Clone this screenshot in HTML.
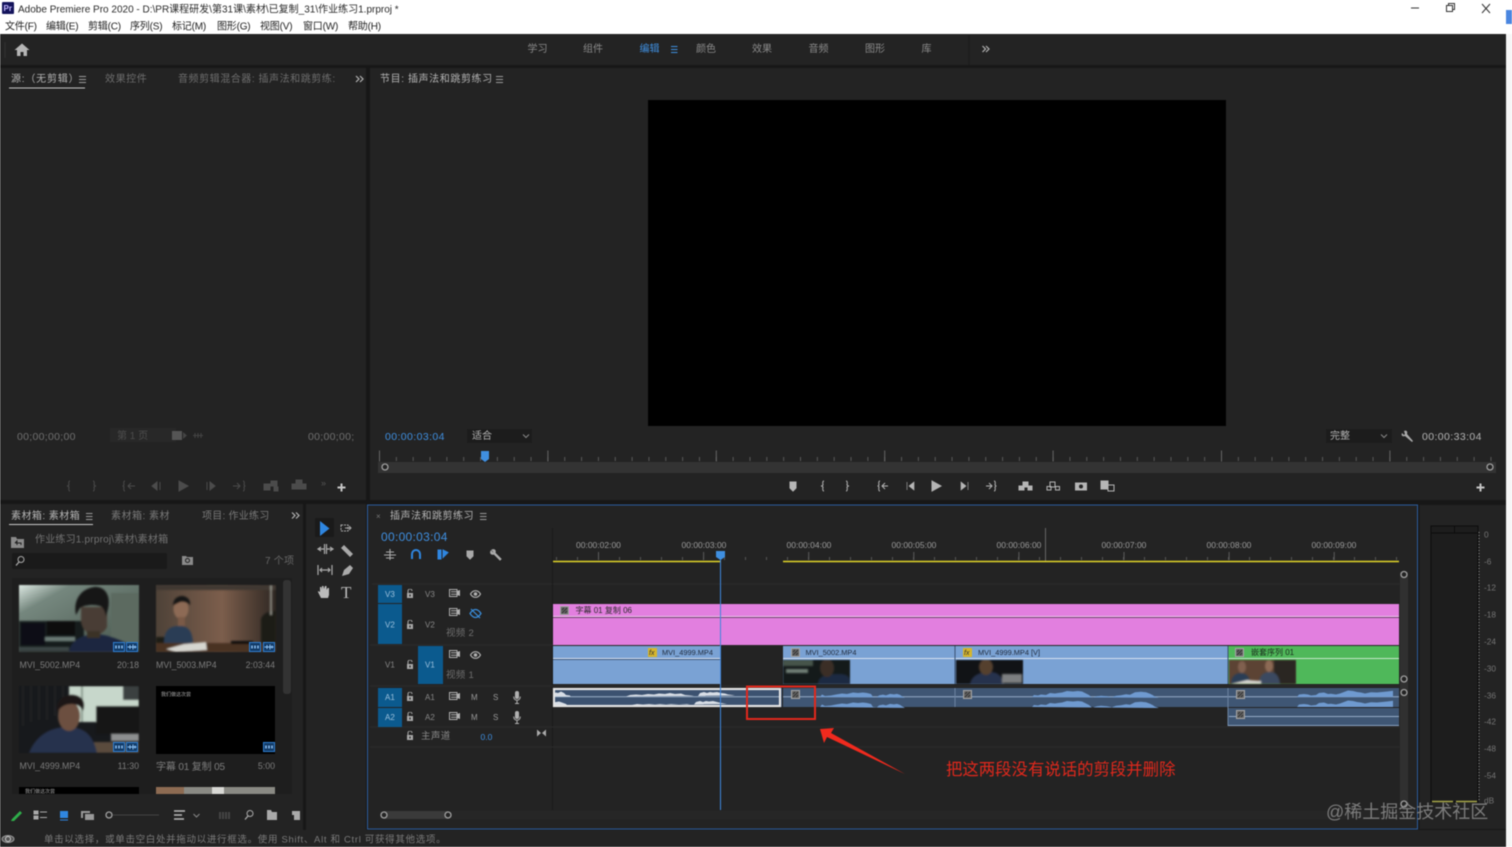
<!DOCTYPE html>
<html lang="zh"><head><meta charset="utf-8"><title>Adobe Premiere Pro 2020</title>
<style>
html,body{margin:0;padding:0;width:1512px;height:847px;overflow:hidden;background:#fff}
svg{display:block;filter:blur(.4px)}
text{font-family:"Liberation Sans","Noto Sans CJK SC",sans-serif;font-size:10px;fill:#8f8f8f;white-space:pre}
.w{fill:#1f1f1f;font-size:10px;letter-spacing:-.2px}
.g{fill:#8a8a8a}.l{fill:#b4b4b4}.d{fill:#4f4f4f}.b{fill:#3f8fe0}
.tab{letter-spacing:.8px;font-size:10px}
.i{fill:#a8a8a8}.s{stroke:#a8a8a8;fill:none;stroke-width:1.2}
.dim{fill:#4d4d4d}
.n{font-size:8.8px;fill:#7c7c7c}
.r{font-size:8.500px;fill:#9a9a9a}
.c{font-size:7.400px;fill:#1f2a3c}
.m{font-size:8.300px;fill:#757575}
</style></head><body>
<svg width="1512" height="847" viewBox="0 0 1512 847" xmlns="http://www.w3.org/2000/svg">
<defs>
<linearGradient id="wall1" x1="0" y1="0" x2="1" y2="1"><stop offset="0" stop-color="#dce8e2"/><stop offset=".22" stop-color="#75877e"/><stop offset="1" stop-color="#46544b"/></linearGradient>
<linearGradient id="brick" x1="0" y1="0" x2="1" y2="0"><stop offset="0" stop-color="#4e4238"/><stop offset=".55" stop-color="#7c5e4c"/><stop offset="1" stop-color="#2e2722"/></linearGradient>
<filter id="bl"><feGaussianBlur stdDeviation=".8"/></filter>
<symbol id="lock" viewBox="0 0 8 9"><path d="M1 4h6v5H1z" fill="#a8a8a8"/><path d="M2 4V2a2 2 0 0 1 4 0" fill="none" stroke="#a8a8a8" stroke-width="1"/><rect x="3.400" y="5.500" width="1.200" height="2" fill="#222"/></symbol>
<symbol id="film" viewBox="0 0 11 8"><path d="M.5.5h7.500v7H.5z" fill="none" stroke="#b0b0b0"/><path d="M2 2.800h6M2 5.200h6" stroke="#b0b0b0"/><path d="M8 2l3-1v6L8 6z" fill="#b0b0b0"/></symbol>
<symbol id="eye" viewBox="0 0 11 8"><path d="M.5 4C2 1.500 3.700.7 5.500.7S9 1.500 10.500 4C9 6.500 7.300 7.300 5.500 7.300S2 6.500.5 4z" fill="none" stroke="#b0b0b0" stroke-width="1.200"/><circle cx="5.500" cy="4" r="1.800" fill="#b0b0b0"/></symbol>
<symbol id="mic" viewBox="0 0 8 13"><rect x="2" y="0" width="4" height="8" rx="2" fill="#b0b0b0"/><path d="M.7 5.500c0 5 6.600 5 6.600 0M4 9.500V12M2 12.500h4" fill="none" stroke="#b0b0b0"/></symbol>
<symbol id="mk" viewBox="0 0 9 9"><rect x=".5" y=".5" width="8" height="8" fill="#676767" stroke="#a5a5a5"/><path d="M2 7l5-5M2 4l2-2M5 7l2-2" stroke="#333"/></symbol>
<symbol id="fx" viewBox="0 0 9 9"><rect width="9" height="9" fill="#d6b62c"/><text x="1" y="7" style="font-size:7px;font-style:italic;fill:#333">fx</text></symbol>
<symbol id="ball" viewBox="0 0 8 8"><circle cx="4" cy="4" r="3" fill="#232323" stroke="#a0a0a0" stroke-width="1.300"/></symbol>
<symbol id="badge" viewBox="0 0 12 10"><rect x=".5" y=".5" width="11" height="9" fill="#123a66" stroke="#2f7ed0"/><path d="M3 3.500v3M6 3.500v3M9 3.500v3" stroke="#8fc3f5" stroke-width="1.500"/></symbol>
<symbol id="badge2" viewBox="0 0 12 10"><rect x=".5" y=".5" width="11" height="9" fill="#123a66" stroke="#2f7ed0"/><path d="M1.500 5h9M4 3v4M7 2.500v5M9 3.500v3" stroke="#8fc3f5"/></symbol>
</defs>

<!-- window chrome -->
<rect width="1512" height="847" fill="#ffffff"/>
<rect x="2" y="2" width="12" height="12" rx="1" fill="#14145c"/>
<text x="3.500" y="11" style="font-size:8px;fill:#c4b8ff;font-weight:bold">Pr</text>
<text x="18" y="12.500" style="font-size:10px;fill:#2a2a2a">Adobe Premiere Pro 2020 - D:\PR课程研发\第31课\素材\已复制_31\作业练习1.prproj *</text>
<text class="w" x="5" y="29.500">文件(F)</text><text class="w" x="46" y="29.500">编辑(E)</text><text class="w" x="88" y="29.500">剪辑(C)</text><text class="w" x="130" y="29.500">序列(S)</text><text class="w" x="172" y="29.500">标记(M)</text><text class="w" x="217" y="29.500">图形(G)</text><text class="w" x="260" y="29.500">视图(V)</text><text class="w" x="303" y="29.500">窗口(W)</text><text class="w" x="348" y="29.500">帮助(H)</text>
<path d="M1411 8h8" stroke="#333" stroke-width="1"/>
<path d="M1446.500 5.500h6v6h-6zM1448.500 5.500V3.500h6v6h-2" fill="none" stroke="#333"/>
<path d="M1482 4l8 9M1490 4l-8 9" stroke="#333"/>
<rect x="1506" y="10" width="6" height="14" fill="#4a86e0"/>

<!-- app bg -->
<rect x="0" y="34" width="1506" height="813" fill="#171717"/>
<rect x="1506" y="34" width="6" height="813" fill="#f6f6f6"/>
<rect x="0" y="34" width="1506" height="31" fill="#232323"/>
<path d="M5 42v16" stroke="#333"/>
<path d="M22 43.500l-7.500 6.500H17v6h3.500v-4h3v4H27v-6h2.500z" fill="#b5b5b5"/>
<text x="527.500" y="52" class="g">学习</text><text x="583" y="52" class="g">组件</text>
<text x="639.500" y="52" class="b">编辑</text><path d="M671 46.500h6.500M671 49.500h6.500M671 52.500h6.500" stroke="#3f8fe0"/>
<text x="696" y="52" class="g">颜色</text><text x="752" y="52" class="g">效果</text><text x="808.500" y="52" class="g">音频</text><text x="865" y="52" class="g">图形</text><text x="921.500" y="52" class="g">库</text>
<path d="M969 35v30" stroke="#1a1a1a"/>
<path d="M982.500 46l3 3-3 3M986 46l3 3-3 3" fill="none" stroke="#b5b5b5" stroke-width="1.200"/>

<!-- source panel -->
<rect x="0" y="68" width="366" height="432" fill="#232323"/>
<text x="11" y="82" class="tab l">源:（无剪辑）</text>
<path d="M79 76.500h7M79 79.500h7M79 82.500h7" stroke="#9a9a9a"/>
<rect x="9" y="87.500" width="76" height="1" fill="#c8c8c8"/>
<text x="105" y="82" class="tab g" style="fill:#6e6e6e;letter-spacing:.6px">效果控件</text>
<text x="178" y="82" class="tab" style="fill:#6e6e6e;letter-spacing:.55px">音频剪辑混合器: 插声法和跳剪练:</text>
<path d="M356 76l3 3-3 3M360 76l3 3-3 3" fill="none" stroke="#b5b5b5" stroke-width="1.200"/>
<text x="17" y="440" style="font-size:10.500px;fill:#6f6f6f;letter-spacing:.3px">00;00;00;00</text>
<rect x="110" y="428" width="66" height="14" fill="#282828"/>
<text x="117" y="439" class="dim">第 1 页</text>
<rect x="172" y="431" width="10" height="9" fill="#555"/><path d="M183 432l4 3.500-4 3.500z" fill="#444"/>
<path d="M193 435.500h10M195 433v5M198 433v5M201 433v5" stroke="#444"/>
<text x="308" y="440" style="font-size:10.500px;fill:#6f6f6f;letter-spacing:.3px">00;00;00;</text>
<g stroke="#4b4b4b" fill="#4b4b4b">
<path d="M70 481c-2 0-1 4-1 4l-1.500 1 1.500 1s-1 4 1 4M93 481c2 0 1 4 1 4l1.500 1-1.500 1s1 4-1 4" fill="none"/>
<path d="M125 481c-2 0-1 4-1 4l-1 1 1 1s-1 4 1 4M135 486h-7M131 483l-3 3 3 3" fill="none"/><path d="M157 482v8l-5-4zM160 482v8" />
<path d="M179 481l9 5-9 5z"/><path d="M207 482v8M210 482l5 4-5 4z"/>
<path d="M233 486h7M237 483l3 3-3 3M243 481c2 0 1 4 1 4l1 1-1 1s1 4-1 4" fill="none"/>
<path d="M264 484h6v6h-6zM271 481h6v5h-6zM274 487h4v4h-4z"/><path d="M292 484h14v5h-14zM296 480h6v4h-6z"/>
</g>
<text x="321" y="486" style="font-size:9px;fill:#555">»</text>
<path d="M341.500 483.500v8M337.500 487.500h8" stroke="#c4c4c4" stroke-width="2"/>

<!-- program panel -->
<rect x="370" y="68" width="1136" height="432" fill="#232323"/>
<text x="380" y="82" class="tab l" style="letter-spacing:.6px">节目: 插声法和跳剪练习</text>
<path d="M496 76.500h7M496 79.500h7M496 82.500h7" stroke="#9a9a9a"/>
<rect x="648" y="100" width="578" height="326" fill="#000"/>
<text x="385" y="440" class="b" style="font-size:10.500px;letter-spacing:.4px">00:00:03:04</text>
<rect x="467" y="429" width="65" height="14" fill="#1c1c1c"/><text x="472" y="439" class="l">适合</text>
<path d="M523 434.500l3 3 3-3" fill="none" stroke="#888"/>
<rect x="1326" y="429" width="66" height="14" fill="#1c1c1c"/><text x="1330" y="439" class="l">完整</text>
<path d="M1381 434.500l3 3 3-3" fill="none" stroke="#888"/>
<path d="M1404 431c2-1 4 0 3 3l6 7-1 1-7-6c-3 1-4-1-3-3l2 2 1-1z" fill="#aaa"/>
<text x="1422" y="440" class="l" style="font-size:10.500px;letter-spacing:.4px">00:00:33:04</text>
<path d="M379 459H1494" stroke="#5a5a5a" stroke-width="4" stroke-dasharray="1 15.840"/>
<path d="M379 456H1494" stroke="#666" stroke-width="11" stroke-dasharray="1 167.400"/>
<rect x="378" y="462" width="1118" height="11" fill="#333"/>
<use href="#ball" x="381" y="463" width="8" height="8"/><use href="#ball" x="1486" y="463" width="8" height="8"/>
<path d="M481 451h8v8l-4 3-4-3z" fill="#3f8fe0"/>
<g fill="#b5b5b5" stroke="#b5b5b5">
<path d="M790 482h6v6l-3 3-3-3z"/>
<path d="M824 481c-2 0-1 4-1 4l-1.500 1 1.500 1s-1 4 1 4M846 481c2 0 1 4 1 4l1.500 1-1.500 1s1 4-1 4" fill="none"/>
<path d="M880 481c-2 0-1 4-1 4l-1 1 1 1s-1 4 1 4M888 486h-6M885 483l-3 3 3 3" fill="none"/>
<path d="M914 482v8l-5-4zM907 482v8" stroke-width=".6"/>
<path d="M932 481l9 5-9 5z"/>
<path d="M961 482v8l5-4zM968 482v8" stroke-width=".6"/>
<path d="M986 486h6M989 483l3 3-3 3M994 481c2 0 1 4 1 4l1 1-1 1s1 4-1 4" fill="none"/>
<path d="M1023 482h5v5h-5zM1019 486h5v4h-5zM1028 486h4v4h-4z"/>
<path d="M1050 482h5v5h-5zM1047 486.500h4v3.500h-4zM1055.500 486.500h4v3.500h-4z" fill="none"/>
<path d="M1075.500 483h11v7h-11z"/>
<path d="M1101 481h7v8h-7z"/><path d="M1108 485h6v6h-6z" fill="none"/>
</g>
<circle cx="1081" cy="486.500" r="2" fill="#232323"/>
<path d="M1480.500 483.500v8M1476.500 487.500h8" stroke="#c4c4c4" stroke-width="2"/>

<!-- project panel -->
<rect x="0" y="504" width="303" height="326" fill="#232323"/>
<text x="11" y="519" class="tab l" style="letter-spacing:.45px">素材箱: 素材箱</text>
<path d="M86 513.500h6.500M86 516.500h6.500M86 519.500h6.500" stroke="#9a9a9a"/>
<rect x="9" y="524" width="84" height="1" fill="#c8c8c8"/>
<text x="111" y="519" class="tab" style="fill:#787878;letter-spacing:.5px">素材箱: 素材</text>
<text x="202" y="519" class="tab" style="fill:#787878;letter-spacing:.25px">项目: 作业练习</text>
<path d="M292 512.500l3 3-3 3M296 512.500l3 3-3 3" fill="none" stroke="#b5b5b5" stroke-width="1.200"/>
<path d="M11 537h5l1 2h7v9H11z" fill="#8a8a8a"/><path d="M15 543l2-2v4M15 543h6v2" stroke="#222" fill="none"/>
<text x="35" y="542.500" style="font-size:10px;fill:#727272;letter-spacing:.2px">作业练习1.prproj\素材\素材箱</text>
<rect x="12" y="553" width="155" height="16" rx="2" fill="#1a1a1a"/>
<circle cx="21" cy="559.500" r="3" fill="none" stroke="#aaa"/><path d="M19 562l-3 3.500" stroke="#aaa" stroke-width="1.300"/>
<path d="M182 556h4l1 1h6v8h-11z" fill="#8a8a8a"/><circle cx="187.500" cy="560.500" r="2" fill="none" stroke="#222"/>
<text x="265" y="564" style="font-size:10px;fill:#666;letter-spacing:.2px">7 个项</text>
<rect x="12" y="578" width="280" height="216" fill="#1e1e1e"/>
<rect x="283" y="580" width="8" height="114" rx="3" fill="#333"/>

<!-- thumb 1 -->
<svg x="19" y="585" width="120" height="67" viewBox="0 0 120 67">
<rect width="120" height="67" fill="url(#wall1)"/>
<g filter="url(#bl)">
<rect x="92" y="8" width="28" height="50" fill="#5b6b60"/>
<rect x="0" y="36" width="65" height="31" fill="#171d1e"/>
<rect x="2" y="38" width="24" height="22" fill="#0d1112"/><rect x="28" y="36" width="28" height="14" fill="#0c1011"/>
<rect x="26" y="52" width="30" height="4" fill="#6a7a76"/><rect x="0" y="62" width="50" height="4" fill="#3a4444"/>
<path d="M50 67c2-12 12-16 24-18 16 0 36 8 46 18z" fill="#1b2840"/>
<path d="M62 22h26v20c-3 6-9 9-14 8-7-1-12-8-12-16z" fill="#4a3e34"/>
<path d="M57 30c-3-14 4-26 18-28 12-1 17 10 14 22l-2 8c-1-6-3-10-6-11-6-2-16-1-20 2z" fill="#191614"/>
<rect x="68" y="46" width="13" height="7" fill="#3b3028"/>
</g></svg>
<use href="#badge" x="113" y="642" width="12" height="10"/><use href="#badge2" x="126" y="642" width="12" height="10"/>
<!-- thumb 2 -->
<svg x="156" y="585" width="120" height="67" viewBox="0 0 120 67">
<rect width="120" height="67" fill="url(#brick)"/>
<g filter="url(#bl)">
<rect x="0" y="0" width="120" height="5" fill="#3f3830"/>
<rect x="0" y="52" width="12" height="15" fill="#1c1a18"/>
<path d="M105 67V34c2-6 8-8 15-8v41z" fill="#1c1a18"/>
<rect x="114" y="0" width="2" height="30" fill="#8a8a82"/>
<rect x="0" y="58" width="120" height="9" fill="#4a3024"/>
<rect x="75" y="56" width="22" height="3" fill="#111"/>
<path d="M8 58c0-12 5-17 15-17 9 0 13 4 14 17z" fill="#2b3c55"/>
<ellipse cx="25" cy="24" rx="7.500" ry="10" fill="#8d6b55"/>
<path d="M17 21c0-7 4-10 9-10s9 4 8 9c-3-3-7-4-10-3-2 1-5 2-7 4z" fill="#171412"/>
<rect x="22" y="32" width="7" height="9" fill="#7a5a47"/>
<path d="M10 64l18-5 22-2 1 8-31 2z" fill="#d6d6d0"/>
</g></svg>
<use href="#badge" x="249" y="642" width="12" height="10"/><use href="#badge2" x="263" y="642" width="12" height="10"/>
<text class="n" x="19.500" y="668">MVI_5002.MP4</text>
<text class="n" x="139" y="668" text-anchor="end">20:18</text>
<text class="n" x="156" y="668">MVI_5003.MP4</text>
<text class="n" x="275" y="668" text-anchor="end">2:03:44</text>
<!-- thumb 3 -->
<svg x="19" y="686" width="120" height="67" viewBox="0 0 120 67">
<rect width="120" height="67" fill="#17191c"/>
<g filter="url(#bl)">
<path d="M4 0v40M12 0v36M20 0v34M28 0v34M36 0v30M44 0v30" stroke="#2a2c2e"/>
<rect x="50" y="0" width="70" height="36" fill="#c7d7cb"/>
<rect x="62" y="0" width="2" height="36" fill="#8a9a8e"/><rect x="104" y="0" width="16" height="14" fill="#3a3f40"/>
<path d="M78 26l10-6v16H78z" fill="#e2e8e2"/>
<rect x="77" y="20" width="43" height="28" fill="#121416"/>
<rect x="92" y="48" width="28" height="7" fill="#8d8f90"/><rect x="75" y="56" width="45" height="11" fill="#5a4c3e"/>
<path d="M10 67c6-16 20-26 38-26 18 0 26 8 30 26z" fill="#28324e"/>
<ellipse cx="50" cy="30" rx="11" ry="15" fill="#6c5040"/>
<path d="M38 26c-2-12 8-19 18-17 8 2 11 8 8 16-3-6-7-7-12-7-5 0-10 2-14 8z" fill="#1a1715"/>
</g></svg>
<use href="#badge" x="113" y="742" width="12" height="10"/><use href="#badge2" x="126" y="742" width="12" height="10"/>
<rect x="156" y="686" width="119" height="68" fill="#000"/>
<text x="161" y="696" style="font-size:5px;fill:#aaa">我们做这次尝</text>
<use href="#badge" x="263" y="742" width="12" height="10"/>
<text class="n" x="19.500" y="769">MVI_4999.MP4</text>
<text class="n" x="139" y="769" text-anchor="end">11:30</text>
<text x="156" y="770" style="font-size:10px;fill:#7c7c7c;letter-spacing:-.15px">字幕 01 复制 05</text>
<text class="n" x="275" y="769" text-anchor="end">5:00</text>
<rect x="19" y="787" width="120" height="7" fill="#000"/><text x="25" y="793" style="font-size:5px;fill:#aaa">我们做这次尝</text>
<rect x="156" y="787" width="119" height="7" fill="#8a8a84"/><rect x="156" y="787" width="28" height="7" fill="#8d6b52"/><rect x="212" y="787" width="12" height="7" fill="#d8d8d4"/>
<!-- project bottom icons -->
<path d="M12 819l8-8 2 2-8 8-3 0z" fill="#2fae4a"/>
<path d="M34 811h4v3h-4zM34 816h4v3h-4zM40 812h7M40 817.500h7" stroke="#aaa" fill="#aaa"/>
<rect x="60" y="811" width="8" height="7" fill="#2f86e0"/><path d="M60 820h8" stroke="#2f86e0"/>
<path d="M81 811h9v2h-7v5h-2zM85 814h9v6h-9z" fill="#999"/>
<use href="#ball" x="105" y="811" width="8" height="8"/><path d="M113 815h46" stroke="#444"/>
<path d="M174 811h11M174 815h8M174 819h10" stroke="#bbb" stroke-width="1.400"/>
<path d="M193.500 814l3 3 3-3" fill="none" stroke="#888"/>
<path d="M220 812v7M223 812v7M226 812v7M229 812v7" stroke="#444" stroke-width="2"/>
<circle cx="250" cy="813.500" r="3" fill="none" stroke="#aaa"/><path d="M248 816l-3 3.500" stroke="#aaa" stroke-width="1.300"/>
<path d="M267 810h4l1 2h5v8h-10z" fill="#aaa"/>
<path d="M292 811h8v9h-6v-5h-2z" fill="#aaa"/>

<!-- tools -->
<rect x="306" y="504" width="60" height="326" fill="#232323"/>
<rect x="315" y="518" width="19" height="19" rx="1" fill="#1a1a1a"/>
<path d="M320 521l9.500 7.500-9.500 7.500z" fill="#2f86e0"/>
<path d="M341 525h7v6h-7z" fill="none" stroke="#aaa" stroke-dasharray="2 1"/><path d="M345 528h6M349 526l2 2-2 2" fill="none" stroke="#aaa"/>
<path d="M318 549h6M327 549h6M324.500 544v10M326.500 544v10M321 547l-3 2 3 2M330 547l3 2-3 2" fill="none" stroke="#aaa" stroke-width="1.200"/>
<path d="M341 548l3-3 9 9-3 3z" fill="#aaa"/>
<path d="M318 565v10M332 565v10M320 570h10M322 568l-2 2 2 2M328 568l2 2-2 2" fill="none" stroke="#aaa" stroke-width="1.200"/>
<path d="M342 576l2-6 6-5 3 3-4 6z" fill="#aaa"/>
<path d="M321 598l-3-6v-1l2 1v-5l1.500 0 .5 3v-4h1.500l.5 3 1-3h1.500v4l1-2h1.500v7l-1 3z" fill="#bbb"/>
<text x="341" y="598" style="font-family:'Liberation Serif',serif;font-size:17px;fill:#bbb">T</text>

<!-- timeline panel -->
<rect x="367.500" y="505" width="1050" height="324" fill="#232323" stroke="#2c5c9c" stroke-width="1"/>
<text x="376" y="519" style="font-size:8px;fill:#777">×</text>
<text x="390" y="519" class="tab l" style="letter-spacing:.5px">插声法和跳剪练习</text>
<path d="M480 513.500h6.500M480 516.500h6.500M480 519.500h6.500" stroke="#9a9a9a"/>
<text x="381" y="541" class="b" style="font-size:12px;letter-spacing:.3px">00:00:03:04</text>
<g fill="none" stroke="#aaa">
<path d="M384 555h12M390 549v11M386 552h8M386 558h8" stroke-width="1.100"/>
<path d="M412 559v-5a4 4 0 0 1 8 0v5" stroke="#2f86e0" stroke-width="2"/>
<path d="M438 550h3v9h-3zM443 550l5 2.500-5 5z" fill="#2f86e0" stroke="#2f86e0"/>
<path d="M467 551h6v5l-3 3-3-3z" fill="#aaa"/>
<path d="M492 550c2-1 4 0 3 3l6 6-1 1-6-6c-3 1-4-1-3-3l2 2 1-1z" fill="#aaa"/>
</g>
<path d="M556 558.500H1400" stroke="#555" stroke-width="3" stroke-dasharray="1 20"/>
<path d="M598 556H1400" stroke="#5c5c5c" stroke-width="8" stroke-dasharray="1 104.100"/>
<text class="r" x="576" y="548">00:00:02:00</text>
<text class="r" x="681.500" y="548">00:00:03:00</text>
<text class="r" x="786.500" y="548">00:00:04:00</text>
<text class="r" x="891.500" y="548">00:00:05:00</text>
<text class="r" x="996.500" y="548">00:00:06:00</text>
<text class="r" x="1101.500" y="548">00:00:07:00</text>
<text class="r" x="1206.500" y="548">00:00:08:00</text>
<text class="r" x="1311.500" y="548">00:00:09:00</text>
<path d="M1045.500 528v33" stroke="#666"/>
<path d="M552 561.500H720M783 561.500H1399" stroke="#e0d428" stroke-width="1.500"/>
<path d="M552.500 528V810" stroke="#1b1b1b"/>
<path d="M553 584H1400M372 584H552M370 645H1400M370 686H1400M370 727H1400M370 747H1400" stroke="#2b2b2b"/>
<!-- track headers -->
<rect x="378" y="585" width="24" height="18" fill="#0b5a8e"/>
<rect x="378" y="604" width="24" height="40" fill="#0b5a8e"/>
<rect x="418" y="646" width="25" height="38" fill="#0b5a8e"/>
<rect x="378" y="688" width="24" height="19" fill="#0b5a8e"/>
<rect x="378" y="708" width="24" height="19" fill="#0b5a8e"/>
<text x="385" y="597" style="font-size:8px;fill:#9cc0dc">V3</text><text x="425" y="597" style="font-size:8px;fill:#888">V3</text>
<text x="385" y="627.500" style="font-size:8px;fill:#9cc0dc">V2</text><text x="425" y="627.500" style="font-size:8px;fill:#888">V2</text>
<text x="385" y="667.500" style="font-size:8px;fill:#888">V1</text><text x="425" y="667.500" style="font-size:8px;fill:#9cc0dc">V1</text>
<text x="385" y="700" style="font-size:8px;fill:#9cc0dc">A1</text><text x="425" y="700" style="font-size:8px;fill:#888">A1</text>
<text x="385" y="720" style="font-size:8px;fill:#9cc0dc">A2</text><text x="425" y="720" style="font-size:8px;fill:#888">A2</text>
<use href="#lock" x="406" y="589" width="8" height="9"/><use href="#lock" x="406" y="620" width="8" height="9"/><use href="#lock" x="406" y="660" width="8" height="9"/><use href="#lock" x="406" y="692" width="8" height="9"/><use href="#lock" x="406" y="712" width="8" height="9"/><use href="#lock" x="406" y="731" width="8" height="9"/>
<use href="#film" x="449" y="589" width="11" height="8"/><use href="#film" x="449" y="608" width="11" height="8"/><use href="#film" x="449" y="650" width="11" height="8"/><use href="#film" x="449" y="692" width="11" height="8"/><use href="#film" x="449" y="712" width="11" height="8"/>
<use href="#eye" x="470" y="590" width="11" height="8"/><use href="#eye" x="470" y="651" width="11" height="8"/>
<path d="M470 613.500c2-3 4-4 5.500-4s3.500 1 5.500 4c-2 3-4 4-5.500 4s-3.500-1-5.500-4zM471 609l9 9" fill="none" stroke="#3a8edc" stroke-width="1.200"/>
<text x="446" y="636" style="font-size:9.500px;fill:#6e6e6e;letter-spacing:.3px">视频 2</text>
<text x="446" y="678" style="font-size:9.500px;fill:#6e6e6e;letter-spacing:.3px">视频 1</text>
<text x="471" y="700" style="font-size:8px;fill:#999">M</text><text x="493" y="700" style="font-size:8px;fill:#999">S</text>
<text x="471" y="720" style="font-size:8px;fill:#999">M</text><text x="493" y="720" style="font-size:8px;fill:#999">S</text>
<use href="#mic" x="513" y="691" width="8" height="13"/><use href="#mic" x="513" y="711" width="8" height="13"/>
<text x="421" y="739" style="font-size:9.500px;fill:#8a8a8a;letter-spacing:.4px">主声道</text>
<text x="480.500" y="740" class="b" style="font-size:8.500px">0.0</text>
<path d="M537 729.500v7l4-3.500zM546 729.500v7l-4-3.500z" fill="#aaa"/>

<!-- clips -->
<rect x="553" y="604" width="846" height="41" fill="#e27fdf"/>
<path d="M553 616.500H1399" stroke="#efc4ee"/><path d="M553 617.500H1399" stroke="#6f3e6e"/>
<use href="#mk" x="560" y="606" width="9" height="9"/>
<text x="575.500" y="613" style="font-size:8px;fill:#2a2a2a">字幕 01 复制 06</text>

<rect x="553" y="646" width="167" height="38" fill="#7aa2d4"/>
<path d="M553 658.500H720" stroke="#d6e2f2"/><path d="M553 659.500H720" stroke="#3f5a80"/>
<use href="#fx" x="648" y="648" width="9" height="9"/>
<text class="c" x="662" y="655">MVI_4999.MP4</text>

<rect x="783" y="646" width="172" height="38" fill="#7aa2d4"/>
<rect x="955.500" y="646" width="272.500" height="38" fill="#7aa2d4"/>
<rect x="1228.500" y="646" width="170.500" height="38" fill="#4fb85a"/>
<path d="M783 658.500H1228" stroke="#d6e2f2"/><path d="M1228 658.500H1399" stroke="#c6e8ca"/>
<path d="M955 646v38M1228 646v38" stroke="#3a5272"/>
<use href="#mk" x="791" y="648" width="9" height="9"/><text class="c" x="805.500" y="655">MVI_5002.MP4</text>
<use href="#fx" x="963" y="648" width="9" height="9"/><text class="c" x="978" y="655">MVI_4999.MP4 [V]</text>
<use href="#mk" x="1235" y="648" width="9" height="9"/><text x="1251" y="655" style="font-size:8px;fill:#1a2a1c">嵌套序列 01</text>
<!-- clip thumbs -->
<svg x="783" y="660" width="67" height="24" viewBox="0 0 67 24"><rect width="67" height="24" fill="#141a1a"/><g filter="url(#bl)"><rect x="0" y="0" width="30" height="6" fill="#46544b"/><rect x="3" y="9" width="22" height="4" fill="#6f7f76"/><path d="M35 24c0-8 8-10 20-10s12 4 12 10z" fill="#1e2b42"/><ellipse cx="44" cy="8" rx="7" ry="9" fill="#3b2f27"/></g></svg>
<svg x="956" y="660" width="67" height="24" viewBox="0 0 67 24"><rect width="67" height="24" fill="#111316"/><g filter="url(#bl)"><path d="M14 24c2-10 12-12 20-12s12 4 14 12z" fill="#28324e"/><ellipse cx="30" cy="7" rx="7" ry="8" fill="#54402f"/><rect x="46" y="14" width="20" height="9" fill="#7d7f80"/></g></svg>
<svg x="1229" y="660" width="67" height="24" viewBox="0 0 67 24"><rect width="67" height="24" fill="#5c4334"/><g filter="url(#bl)"><rect x="45" y="0" width="22" height="24" fill="#2a2522"/><path d="M2 24c0-8 5-11 10-11s9 4 10 11z" fill="#2b3c55"/><ellipse cx="13" cy="7" rx="4" ry="6" fill="#806050"/><path d="M30 24c0-9 5-12 11-12s9 4 10 12z" fill="#3b4a60"/><ellipse cx="40" cy="6" rx="4" ry="6" fill="#8d6b55"/><path d="M2 24l16-4 14 1v3z" fill="#d6d6d0"/></g></svg>

<!-- audio -->
<rect x="553" y="688" width="229" height="19" fill="#3c5270"/>
<path d="M553 696.700H780" stroke="#9cb0c8"/>
<!-- white selected waveform -->
<g fill="#d8dee6">
<path d="M553 696.500v-3l3-1 2 .5 3-1.500 3 1.500 2 2 4 .5 .5 1zM626 696.500l4-1.500 6-.5 6 .5 6-1 6 .5 5-1 6 .5 5-1 5 1 6-.5 4 1.500 6 .5 3 .5 4 0 2-3 4-1 3 1 3-1 3 .5 4-.5 4 1 4 .5 3 1 4 .5 3 .5z"/>
<path d="M553 705v-2.500l3-.5 3-.5 3 1 4 1.500 1 1zM632 705l5-1 6 .5 6-.5 6 .5 5-.5 6 .5 5-.5 8 .5 8-.5 3 .5 4 0 2-2.500 4-1 3 1 3-1 3 .5 4-.5 4 1 4 1 3 .5 3 .5z"/>
</g>
<rect x="554" y="689" width="226" height="17" fill="none" stroke="#e4e4e4" stroke-width="2.200"/>
<rect x="783" y="688" width="172" height="19" fill="#3f5674"/>
<rect x="955.500" y="688" width="272.500" height="19" fill="#3f5674"/>
<rect x="1228.500" y="688" width="170.500" height="19" fill="#3f5674"/>
<rect x="1228.500" y="708" width="170.500" height="18" fill="#3f5674"/>
<path d="M783 696.700H1399M1229 716.500H1399" stroke="#94aac6"/>
<path d="M955 688v19M1228 688v38" stroke="#6d84a2"/>
<rect x="1228" y="725" width="171" height="1" fill="#88a0c0"/>
<g fill="#6f9ad0">
<!-- MVI_5002 -->
<path d="M820 697l2-2.500 3 1.500 6-.5 5-1 6-1 5 .5 6-1.500 5 .5 5-.5 4 .5 4 1 2 3 4 .2 2-1.800 4-.8 3 .8 4-1.500 4 .5 3-.5 3 1 3 2 2 .8z"/>
<path d="M820 707l2-2.500 3 1.500 6-.5 5-1 6-1 5 .5 6-1.500 5 .5 5-.5 4 .5 4 1 2 3 4 .2 2-1.800 4-.8 3 .8 4-1.500 4 .5 3-.5 3 1 3 2 2 1z"/>
<!-- MVI_4999 -->
<path d="M1032 697l2-2 4 .5 3-1 5 .5 4-2 5 .5 3-.5 4-.5 5-1.500 6 .5 5-.5 4 .5 4 2 3 1.500 3 2.800 5-1.500 4-.5 6 .5 5 1 4-1.500 5-.5 5-1 4 .5 5-2.500 6-.5 5 .5 4 1.500 3 1.500 2 1.500 4 1z"/>
<path d="M1032 707l2-2 4 .5 3-1 5 .5 4-2 5 .5 3-.5 4-.5 5-1.500 6 .5 5-.5 4 .5 4 2 3 1.500 3 2.800 5-1.500 4-.5 6 .5 5 1 4-1.500 5-.5 5-1 4 .5 5-2.500 6-.5 5 .5 4 1.500 3 1.500 2 1.500 4 1.200z"/>
<!-- nested -->
<path d="M1297 697l2-2.500 5-.5 4 .5 3 1 5-.5 3-2 5-.5 4 1.500 3-.2 5 .7 4-1 4-1.500 4-1.500 5 .5 4 1 4 .5 4 1 6-1.300 6 .3 5-.5 5-.5 4-.5 2-.3V697z"/>
<path d="M1297 707l2-2.500 5-.5 4 .5 3 1 5-.5 3-2 5-.5 4 1.500 3-.2 5 .7 4-1 4-1.500 4-1.500 5 .5 4 1 4 .5 4 1 6-1.300 6 .3 5-.5 5-.5 4-.5 2-.3V707z"/>
</g>
<use href="#mk" x="791" y="690" width="9" height="9"/><use href="#mk" x="963" y="690" width="9" height="9"/><use href="#mk" x="1236" y="690" width="9" height="9"/><use href="#mk" x="1236" y="710" width="9" height="9"/>
<!-- playhead -->
<path d="M720.500 555V810" stroke="#3f86dc"/>
<path d="M716 551h9v6l-4.500 3-4.500-3z" fill="#3f8fe0"/>
<!-- scroll -->
<rect x="1400" y="572" width="8" height="236" fill="#303030"/>
<use href="#ball" x="1400" y="570.500" width="8" height="8"/><use href="#ball" x="1400" y="675" width="8" height="8"/><use href="#ball" x="1400" y="688.500" width="8" height="8"/><use href="#ball" x="1400" y="800" width="8" height="8"/>
<rect x="380" y="811" width="1020" height="8" fill="#262626"/>
<rect x="384" y="811" width="64" height="8" fill="#3a3a3a"/>
<use href="#ball" x="380" y="811" width="8" height="8"/><use href="#ball" x="444" y="811" width="8" height="8"/>
<!-- annotation -->
<rect x="747" y="686.500" width="68" height="32.500" fill="none" stroke="#e2281c" stroke-width="2"/>
<path d="M820 729l14-1-3 5 74 41-78-37-3 6z" fill="#f02a1e"/>
<text x="946" y="775" style="font-size:16.400px;fill:#e0281c">把这两段没有说话的剪段并删除</text>

<!-- meter -->
<rect x="1419.500" y="505" width="86.500" height="324" fill="#232323"/>
<rect x="1431" y="526" width="47" height="276" fill="#1d1d1d" stroke="#0c0c0c"/>
<path d="M1431 533h47M1454.500 526v7" stroke="#0c0c0c"/>
<path d="M1432 801.500h21M1456 801.500h21" stroke="#a9a94a" stroke-width="1.500"/>
<path d="M1479 532V802" stroke="#999" stroke-dasharray="1 2"/>
<text class="m" x="1484" y="537.500">0</text>
<text class="m" x="1484" y="564.500">-6</text>
<text class="m" x="1484" y="590.500">-12</text>
<text class="m" x="1484" y="617.500">-18</text>
<text class="m" x="1484" y="644.500">-24</text>
<text class="m" x="1484" y="671.500">-30</text>
<text class="m" x="1484" y="698.500">-36</text>
<text class="m" x="1484" y="724.500">-42</text>
<text class="m" x="1484" y="751.500">-48</text>
<text class="m" x="1484" y="778.500">-54</text>
<text class="m" x="1484" y="803.500">dB</text>

<!-- status -->
<rect x="0" y="830" width="1506" height="17" fill="#232323"/>
<ellipse cx="8" cy="839" rx="6" ry="3.500" fill="#555" stroke="#999"/><circle cx="8" cy="839" r="2.500" fill="none" stroke="#ccc"/>
<text x="44" y="842.500" style="font-size:9.500px;fill:#7a7a7a;letter-spacing:.68px">单击以选择，或单击空白处并拖动以进行框选。使用 Shift、Alt 和 Ctrl 可获得其他选项。</text>
<!-- watermark -->
<text x="1326" y="818" style="font-size:18px;fill:#8c8c8c;fill-opacity:.85">@稀土掘金技术社区</text>
</svg>
</body></html>
